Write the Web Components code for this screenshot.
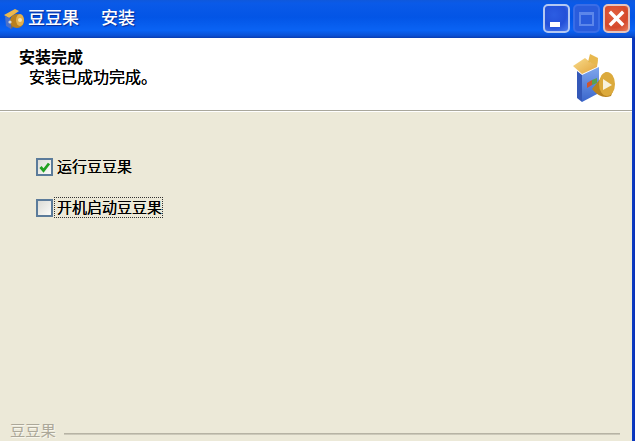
<!DOCTYPE html>
<html>
<head>
<meta charset="utf-8">
<style>
  html, body { margin: 0; padding: 0; background: #ece9d8; }
  body { font-family: "Liberation Sans", "Noto Sans CJK SC", sans-serif; }
</style>
</head>
<body>
<xp-window>
  <xp-titlebar slot="title">
    <span>豆豆果</span><span>安装</span>
  </xp-titlebar>
  <xp-header heading="安装完成" text="安装已成功完成。"></xp-header>
  <xp-check checked>运行豆豆果</xp-check>
  <xp-check focused>开机启动豆豆果</xp-check>
  <xp-brand>豆豆果</xp-brand>
</xp-window>

<script>
class XpWindow extends HTMLElement {
  constructor() {
    super();
    this.attachShadow({ mode: 'open' });
  }

  connectedCallback() {
    this.shadowRoot.innerHTML = `
      <style>
        :host {
          display: flex;
          flex-direction: column;
          width: 635px;
          height: 441px;
          overflow: hidden;
          background: #ece9d8;
        }
        .body {
          flex: 1;
          display: flex;
          min-height: 0;
        }
        .inner {
          flex: 1;
          display: flex;
          flex-direction: column;
          min-width: 0;
        }
        .edge {
          width: 3px;
          background: linear-gradient(90deg, #0a3fc4, #0a2fb8);
        }
      </style>
      <slot name="title"></slot>
      <div class="body">
        <div class="inner"><slot></slot></div>
        <div class="edge"></div>
      </div>
    `;
  }
}

class XpTitlebar extends HTMLElement {
  constructor() {
    super();
    this.attachShadow({ mode: 'open' });
  }

  connectedCallback() {
    this.shadowRoot.innerHTML = `
      <style>
        :host {
          display: flex;
          align-items: center;
          height: 38px;
          box-sizing: border-box;
          padding: 0 5px 0 3px;
          background: linear-gradient(180deg, #0f58dc 0, #0a5ae8 8%, #0355e6 45%, #0a63f4 80%, #0b50d4 94%, #0a3cb0 100%);
          color: #fff;
          font-size: 17px;
          font-weight: 500;
          text-shadow: 1px 1px 1px #0a2a90;
        }
        .ico { width: 22px; height: 22px; flex: none; margin-right: 3px; filter: blur(.3px); }
        .txt { display: flex; gap: 22px; flex: 1; line-height: 20px; }
        .btns { display: flex; gap: 3px; margin-top: -1px; }
        .btn {
          width: 27px;
          height: 29px;
          box-sizing: border-box;
          border: 2px solid #b4c8f2;
          border-radius: 5px;
          background: radial-gradient(circle at 40% 35%, #2c5de2, #2450d8 55%, #4d7cee);
          display: flex;
          align-items: center;
          justify-content: center;
        }
        .btn.off {
          border-color: #3a6de6;
          background: #2a5cdc;
        }
        .btn.close {
          border-color: #e6c4bc;
          background: radial-gradient(circle at 40% 35%, #e2603f, #d5492c 60%, #e8805f);
        }
        svg { display: block; }
      </style>
      <svg class="ico" viewBox="0 0 22 22">
        <path d="M1 7 L12 1 L16 3 L6 10 Z" fill="#ecb84c"/>
        <path d="M2 8 L8 11 L8 21 L3 18 Z" fill="#4a70c8"/>
        <path d="M8 9 L14 6 L14 16 L8 21 Z" fill="#7d6a58"/>
        <circle cx="14" cy="13" r="7" fill="#b8801e"/>
        <ellipse cx="17" cy="12" rx="4" ry="6" fill="#e2b04a"/>
        <circle cx="17" cy="12" r="2" fill="#f6e4ae"/>
        <circle cx="7" cy="14" r="1.6" fill="#d8d8d8"/>
      </svg>
      <div class="txt"><slot></slot></div>
      <div class="btns">
        <div class="btn">
          <svg width="23" height="25" viewBox="0 0 23 25"><rect x="5" y="16" width="10" height="5" fill="#fff"/></svg>
        </div>
        <div class="btn off">
          <svg width="23" height="25" viewBox="0 0 23 25"><rect x="5" y="7" width="13" height="12" fill="none" stroke="#5c86ea" stroke-width="2"/><rect x="5" y="6" width="13" height="3" fill="#5c86ea"/></svg>
        </div>
        <div class="btn close">
          <svg width="23" height="25" viewBox="0 0 23 25"><path d="M6 7 L17 18 M17 7 L6 18" stroke="#fff" stroke-width="3.4" stroke-linecap="square"/></svg>
        </div>
      </div>
    `;
  }
}

class XpHeader extends HTMLElement {
  constructor() {
    super();
    this.attachShadow({ mode: 'open' });
  }

  connectedCallback() {
    this.shadowRoot.innerHTML = `
      <style>
        :host {
          display: flex;
          height: 73px;
          box-sizing: border-box;
          background: #fff;
          border-bottom: 1px solid #a9a79c;
          box-shadow: 0 1px 0 #fff;
          padding: 10px 12px 0 19px;
          color: #000;
        }
        .copy { flex: 1; }
        h1 {
          margin: 0;
          font-size: 16px;
          line-height: 20px;
          font-weight: 700;
        }
        p {
          margin: 0 0 0 10px;
          font-size: 16px;
          line-height: 20px;
          text-shadow: 0 0 .4px #000;
        }
        svg { display: block; width: 55px; height: 55px; margin-top: 2px; filter: blur(.4px); }
      </style>
      <div class="copy">
        <h1>${this.getAttribute('heading')}</h1>
        <p>${this.getAttribute('text')}</p>
      </div>
      <svg viewBox="0 0 55 55">
        <defs>
          <linearGradient id="side" x1="0" y1="0" x2="0" y2="1">
            <stop offset="0" stop-color="#7fa6ec"/>
            <stop offset="1" stop-color="#3a66cc"/>
          </linearGradient>
          <linearGradient id="flap" x1="0" y1="0" x2="1" y2="1">
            <stop offset="0" stop-color="#f8dc8c"/>
            <stop offset="1" stop-color="#e2a238"/>
          </linearGradient>
        </defs>
        <path d="M8 16 L20 8 L26 13 L33 9 L32 17 L17 24 Z" fill="url(#flap)"/>
        <path d="M23 12 L25 4 L33 8 L32 15 Z" fill="#e8b84e"/>
        <path d="M12 21 L17 25 L17 52 L12 48 Z" fill="#3458b8"/>
        <path d="M17 25 L34 17 L34 43 L17 52 Z" fill="url(#side)"/>
        <path d="M22 33 L27 30 L27 35 L22 38 Z" fill="#d0562c"/>
        <path d="M27 30 L32 28 L32 33 L27 35 Z" fill="#5aa04a"/>
        <path d="M27 39 L41 22 Q54 30 46 46 Q36 50 27 39 Z" fill="#b8831f"/>
        <ellipse cx="42" cy="34" rx="8" ry="12" fill="#dcaa3c"/>
        <path d="M38 29 L47 35 L38 40 Z" fill="#f8f2dc"/>
      </svg>
    `;
  }
}

class XpCheck extends HTMLElement {
  constructor() {
    super();
    this.attachShadow({ mode: 'open' });
  }

  connectedCallback() {
    const mark = this.hasAttribute('checked')
      ? '<svg viewBox="0 0 13 14" width="13" height="14"><path d="M2.5 7 L5.5 10.5 L11 3.5" fill="none" stroke="#21a121" stroke-width="2.8"/></svg>'
      : '';
    this.shadowRoot.innerHTML = `
      <style>
        :host {
          display: flex;
          align-items: center;
          gap: 1px;
          height: 21px;
          margin: 0 0 20px 36px;
          font-size: 15px;
          color: #000;
        }
        :host(:first-of-type) { margin-top: 45px; }
        .box {
          width: 17px;
          height: 18px;
          box-sizing: border-box;
          flex: none;
          border: 2px solid #5b7b9a;
          background: linear-gradient(135deg, #dcdcd6, #fbfbf8);
          display: flex;
          align-items: center;
          justify-content: center;
        }
        .label { line-height: 21px; padding: 0 1px 0 3px; text-shadow: 0 0 .3px #000; }
        :host([focused]) .label { outline: 1px dotted #333; outline-offset: -1px; }
      </style>
      <div class="box">${mark}</div>
      <div class="label"><slot></slot></div>
    `;
  }
}

class XpBrand extends HTMLElement {
  constructor() {
    super();
    this.attachShadow({ mode: 'open' });
  }

  connectedCallback() {
    this.shadowRoot.innerHTML = `
      <style>
        :host {
          display: flex;
          align-items: center;
          gap: 8px;
          margin-top: auto;
          box-sizing: border-box;
          padding: 0 12px 2px 10px;
          height: 22px;
          font-size: 15.3px;
          color: #aca899;
          text-shadow: 1px 1px 0 #f8f6ec;
        }
        .rule {
          flex: 1;
          height: 2px;
          margin-top: 10px;
          background: linear-gradient(180deg, #aca899, #d6d3c4);
        }
      </style>
      <slot></slot>
      <div class="rule"></div>
    `;
  }
}

customElements.define('xp-window', XpWindow);
customElements.define('xp-titlebar', XpTitlebar);
customElements.define('xp-header', XpHeader);
customElements.define('xp-check', XpCheck);
customElements.define('xp-brand', XpBrand);
</script>
</body>
</html>
